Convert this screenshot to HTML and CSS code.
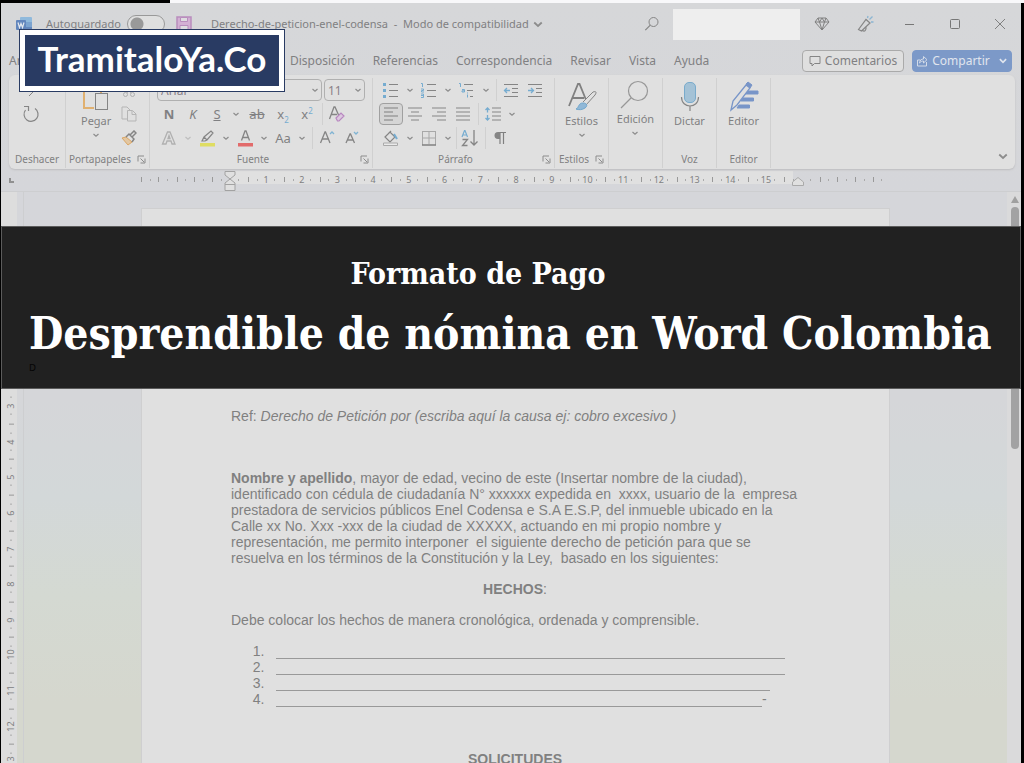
FILE: index.html
```html
<!DOCTYPE html>
<html lang="es">
<head>
<meta charset="utf-8">
<meta name="viewport" content="width=device-width, initial-scale=1">
<title>Desprendible de nómina en Word Colombia</title>
<link rel="stylesheet" href="styles.css">
</head>
<body>
<svg class="defs" aria-hidden="true">
  <symbol id="chev" viewBox="0 0 8 8"><path d="M1.500 3 4 5.300l2.500-2.300" fill="none" stroke="#8c8c8c" stroke-width="1.200"/></symbol>
  <symbol id="launch" viewBox="0 0 9 9"><path d="M1 6.500V1h6M3.500 3.500 7 7M8 3.500V8H3.500" fill="none" stroke="#8c8c8c" stroke-width="1"/></symbol>
</svg>
<div class="strip"></div>
<div class="app">
  <header class="titlebar">
    <svg class="word" width="17" height="17" viewBox="0 0 17 17"><rect x="4" y="1" width="12" height="15" rx="1" fill="#8fb9dc"/><path d="M4 6h12v5H4z" fill="#7ba3d0"/><path d="M4 11h12v5H4z" fill="#6488be"/><rect y="4" width="10" height="10" rx="1" fill="#6286bd"/><path d="m2 6.500 1.500 5L5 7.500l1.500 4 1.500-5" fill="none" stroke="#e4e8ee" stroke-width="1.200"/></svg>
    <label class="auto">Autoguardado <input type="checkbox" role="switch"></label>
    <button class="plain save" aria-label="Guardar"><svg width="16" height="16" viewBox="0 0 16 16"><path d="M1 1h14v14H1z" fill="#d3b0d4" stroke="#b98dbd" stroke-width="1.500"/><path d="M4.500 1.500h7v4h-7zM4 9.500h8V15H4z" fill="#dedde0" stroke="#b98dbd"/></svg></button>
    <span class="filename">Derecho-de-peticion-enel-codensa&nbsp; -&nbsp; Modo de compatibilidad</span>
    <svg class="chev big" width="12" height="12"><use href="#chev"/></svg>
    <div class="right">
      <button class="plain" aria-label="Buscar"><svg width="16" height="16" viewBox="0 0 16 16"><circle cx="9.500" cy="6" r="4.500" fill="none" stroke="#858585"/><path d="m6.300 9.200-5 5" stroke="#858585" stroke-width="1.200"/></svg></button>
      <div class="account"></div>
      <button class="plain gem" aria-label="Premium"><svg width="16" height="16" viewBox="0 0 16 16"><path d="M4 2h8l3 4-7 8-7-8zM1 6h14M5.500 6 8 14l2.500-8L8 2 5.500 6 4 2m6.500 4L12 2" fill="none" stroke="#808080" stroke-width="1"/></svg></button>
      <button class="plain mega" aria-label="Novedades"><svg width="18" height="18" viewBox="0 0 18 18"><path d="M1.500 14.500 9 4.500l4 3.500-8.500 8zM5.500 15.500c2 1.500 4 0 3.500-3.500" fill="none" stroke="#858585" stroke-width="1.200"/><path d="m10.500 3 .500-2M12.500 4.500l3-3M14 7h2.500" stroke="#8bb5d2" stroke-width="1.300"/></svg></button>
      <button class="plain win" aria-label="Minimizar"><svg width="12" height="12" viewBox="0 0 12 12"><path d="M1 6.500h9" stroke="#777"/></svg></button>
      <button class="plain win" aria-label="Maximizar"><svg width="12" height="12" viewBox="0 0 12 12"><rect x="1.500" y="1.500" width="9" height="9" rx="1" fill="none" stroke="#777"/></svg></button>
      <button class="plain win" aria-label="Cerrar"><svg width="12" height="12" viewBox="0 0 12 12"><path d="m1 1 10 10M11 1 1 11" stroke="#808080"/></svg></button>
    </div>
  </header>
  <nav class="tabs">
    <a class="first" href="#archivo">Archivo</a>
    <a href="#disposicion">Disposición</a>
    <a href="#referencias">Referencias</a>
    <a href="#correspondencia">Correspondencia</a>
    <a href="#revisar">Revisar</a>
    <a href="#vista">Vista</a>
    <a href="#ayuda">Ayuda</a>
    <div class="tabactions">
      <button class="comments"><svg width="12" height="12" viewBox="0 0 12 12"><path d="M1 1.500h10v7H5.500L3 11V8.500H1z" fill="none" stroke="#858585"/></svg>Comentarios</button>
      <button class="share"><svg width="12" height="12" viewBox="0 0 12 12"><path d="M4.500 5H1.500v6h9V7M3.500 8c.5-3 2-4 4-4V1.500L11 4.700 7.500 8V6C6 6 5 6.500 3.500 8z" fill="none" stroke="#d3dbe8"/></svg>Compartir<svg width="10" height="10" viewBox="0 0 8 8"><path d="M1.500 2.500 4 5l2.500-2.500" fill="none" stroke="#e0e5ee" stroke-width="1.300"/></svg></button>
    </div>
  </nav>
  <section class="ribbon">
    <div class="group g-undo">
      <div class="tools center">
        <svg width="20" height="12" viewBox="0 0 20 12"><path d="m8 9 6-6" stroke="#858585" fill="none"/></svg>
        <button class="plain" aria-label="Rehacer"><svg width="18" height="18" viewBox="0 0 18 18"><path d="M3.500 5A7 7 0 1 0 13 3.500M2 1.500h4.500V6" fill="none" stroke="#858585" stroke-width="1.200"/></svg></button>
      </div>
      <div class="caption">Deshacer</div>
    </div>
    <div class="group g-clip">
      <div class="tools cliprow">
        <button class="plain tall"><svg width="28" height="34" viewBox="0 0 28 34"><path d="M19 5v10M2 5v24h10M2 5h17" fill="none" stroke="#e0b070" stroke-width="2"/><rect x="13.500" y="14.500" width="12" height="16" fill="#e0e0e0" stroke="#858585"/></svg>Pegar<svg class="chev" width="8" height="8"><use href="#chev"/></svg></button>
        <div class="stack">
          <button class="plain" aria-label="Cortar"><svg width="16" height="16" viewBox="0 0 16 16"><path d="m5 2 5 9M11 2l-5 9" stroke="#b0b0b0"/><circle cx="4.500" cy="12.500" r="2" fill="none" stroke="#b0b0b0"/><circle cx="11.500" cy="12.500" r="2" fill="none" stroke="#b0b0b0"/></svg></button>
          <button class="plain" aria-label="Copiar"><svg width="16" height="16" viewBox="0 0 16 16"><path d="M6 13H1V1h5l3 3M6.500 4.500h5l3.500 3.500v7H6.500zM11 5v3.500h4" fill="none" stroke="#b5b5b5"/></svg></button>
          <button class="plain" aria-label="Copiar formato"><svg width="16" height="16" viewBox="0 0 16 16"><path d="m1 8 4-1 6 5-4 3z" fill="#e2c7a3" stroke="#dba664"/><path d="m5 7 3-3 5 5-2 3M9 5l4-4 2 2-4 4" fill="none" stroke="#858585" stroke-width="1.500"/></svg></button>
        </div>
      </div>
      <div class="caption">Portapapeles<svg width="9" height="9"><use href="#launch"/></svg></div>
    </div>
    <div class="group g-font">
      <div class="tools">
        <div class="row">
          <span class="pick family"><select aria-label="Fuente"><option>Arial</option></select><svg class="chev" width="8" height="8"><use href="#chev"/></svg></span>
          <span class="pick size"><select aria-label="Tamaño"><option>11</option></select><svg class="chev" width="8" height="8"><use href="#chev"/></svg></span>
        </div>
        <div class="row">
          <button class="plain b"><b>N</b></button><button class="plain b"><i>K</i></button><button class="plain b"><u>S</u></button><svg class="chev" width="8" height="8"><use href="#chev"/></svg>
          <button class="plain b wide"><s>ab</s></button><button class="plain b"><span>x<sub>2</sub></span></button><button class="plain b"><span>x<sup>2</sup></span></button><i class="sep"></i>
          <button class="plain b" aria-label="Borrar formato"><svg width="18" height="18" viewBox="0 0 18 18"><path d="M1.500 14 6 2h1l4 9M3 9.500h6" fill="none" stroke="#858585" stroke-width="1.300"/><path d="m8 13 5-5 3 3-5 5H9.500z" fill="#dcc8df" stroke="#b887c0" stroke-width="1.200"/></svg></button>
        </div>
        <div class="row">
          <button class="plain b" aria-label="Efectos de texto"><svg width="16" height="16" viewBox="0 0 16 16"><path d="M1.500 14 6.500 2h2.500l5 12h-3l-1-3H6l-1 3zM7 8.500h2L8 5.500z" fill="none" stroke="#b0b0b0" stroke-width="1.300"/></svg></button><svg class="chev faint" width="8" height="8"><use href="#chev"/></svg>
          <button class="plain b" aria-label="Color de resaltado"><svg width="18" height="18" viewBox="0 0 18 18"><path d="M2 14h15v3.500H2z" fill="#dfdd62"/><path d="m4 12 2-4 7-6 2 2-6 7-2 1zM6 8l3 3" fill="none" stroke="#858585" stroke-width="1.200"/></svg></button><svg class="chev" width="8" height="8"><use href="#chev"/></svg>
          <button class="plain b" aria-label="Color de fuente"><svg width="18" height="18" viewBox="0 0 18 18"><path d="M2 14h15v3.500H2z" fill="#e26b6b"/><path d="M5.500 11.500 9 2h1l3.500 9.500M6.500 8.500h6" fill="none" stroke="#858585" stroke-width="1.300"/></svg></button><svg class="chev" width="8" height="8"><use href="#chev"/></svg>
          <button class="plain b">Aa</button><svg class="chev" width="8" height="8"><use href="#chev"/></svg><i class="sep"></i>
          <button class="plain b" aria-label="Aumentar tamaño"><svg width="18" height="18" viewBox="0 0 18 18"><path d="M2.500 14 7 3h.500L12 14M4 10h7" fill="none" stroke="#858585" stroke-width="1.300"/><path d="m12 5 2-2 2 2" fill="none" stroke="#7fb3d3" stroke-width="1.300"/></svg></button>
          <button class="plain b" aria-label="Reducir tamaño"><svg width="18" height="18" viewBox="0 0 18 18"><path d="m4 14 4-9h.500l4 9M5.500 11h6" fill="none" stroke="#858585" stroke-width="1.300"/><path d="m12 3 2 2 2-2" fill="none" stroke="#7fb3d3" stroke-width="1.300"/></svg></button>
        </div>
      </div>
      <div class="caption wide-cap">Fuente<svg class="end" width="9" height="9"><use href="#launch"/></svg></div>
    </div>
    <div class="group g-par">
      <div class="tools">
        <div class="row">
          <button class="plain b" aria-label="Viñetas"><svg width="16" height="16" viewBox="0 0 16 16"><path d="M6 2.500h9M6 8.500h9M6 14.500h9" stroke="#858585"/><path d="M0 1h3v3H0zM0 7h3v3H0zM0 13h3v3H0z" fill="#76acd0"/></svg></button><svg class="chev" width="8" height="8"><use href="#chev"/></svg>
          <button class="plain b" aria-label="Numeración"><svg width="16" height="16" viewBox="0 0 16 16"><path d="M6 2.500h9M6 8.500h9M6 14.500h9" stroke="#858585"/><path d="M0 1.500h1.500V5M0 7h2.500v1.500H.5V10H3M0 12h2.500v3.500H0m0-2h2.500" fill="none" stroke="#76acd0"/></svg></button><svg class="chev" width="8" height="8"><use href="#chev"/></svg>
          <button class="plain b" aria-label="Lista multinivel"><svg width="16" height="16" viewBox="0 0 16 16"><path d="M5 2.500h9M8 8.500h6M11 14.500h3" stroke="#858585"/><path d="M0 1.500h1.500V5M3 7.500h2.500V10H3V8.800h2.500M8.500 12.500v3M8.500 10.500v1" fill="none" stroke="#76acd0"/></svg></button><svg class="chev" width="8" height="8"><use href="#chev"/></svg><i class="sep"></i>
          <button class="plain b" aria-label="Disminuir sangría"><svg width="16" height="16" viewBox="0 0 16 16"><path d="M1 2.500h14M9 6.500h6M9 10.500h6M1 14.500h14" stroke="#858585"/><path d="M7 8.500H1.500M4 6 1.500 8.500 4 11" fill="none" stroke="#76acd0" stroke-width="1.300"/></svg></button>
          <button class="plain b" aria-label="Aumentar sangría"><svg width="16" height="16" viewBox="0 0 16 16"><path d="M1 2.500h14M9 6.500h6M9 10.500h6M1 14.500h14" stroke="#858585"/><path d="M1 8.500h5.500M4 6l2.500 2.500L4 11" fill="none" stroke="#76acd0" stroke-width="1.300"/></svg></button>
        </div>
        <div class="row">
          <button class="plain b on" aria-label="Alinear a la izquierda"><svg width="16" height="16" viewBox="0 0 16 16"><path d="M1 2h14M1 6h9M1 10h14M1 14h9" stroke="#808080" stroke-width="1.200"/></svg></button>
          <button class="plain b" aria-label="Centrar"><svg width="16" height="16" viewBox="0 0 16 16"><path d="M1 2h14M4 6h8M1 10h14M4 14h8" stroke="#858585" stroke-width="1.200"/></svg></button>
          <button class="plain b" aria-label="Alinear a la derecha"><svg width="16" height="16" viewBox="0 0 16 16"><path d="M1 2h14M6 6h9M1 10h14M6 14h9" stroke="#858585" stroke-width="1.200"/></svg></button>
          <button class="plain b" aria-label="Justificar"><svg width="16" height="16" viewBox="0 0 16 16"><path d="M1 2h14M1 6h14M1 10h14M1 14h14" stroke="#858585" stroke-width="1.200"/></svg></button><i class="sep"></i>
          <button class="plain b" aria-label="Espaciado"><svg width="16" height="16" viewBox="0 0 16 16"><path d="M7 2h9M7 6h9M7 10h9M7 14h9" stroke="#858585" stroke-width="1.200"/><path d="M2.500 1.500V6.500M.5 4l2-2 2 2M2.500 9v5.500M.5 12l2 2 2-2" fill="none" stroke="#76acd0" stroke-width="1.300"/></svg></button><svg class="chev" width="8" height="8"><use href="#chev"/></svg>
        </div>
        <div class="row">
          <button class="plain b" aria-label="Sombreado"><svg width="16" height="16" viewBox="0 0 16 16"><path d="m2 7 5-5 5 5-5 5zM5 4 8 1" fill="none" stroke="#858585" stroke-width="1.200"/><path d="m11 4 3 5" stroke="#76acd0" stroke-width="2"/><path d="M.5 13h14v2.500H.5z" fill="#eaeaea" stroke="#aaa"/></svg></button><svg class="chev" width="8" height="8"><use href="#chev"/></svg>
          <button class="plain b" aria-label="Bordes"><svg width="16" height="16" viewBox="0 0 16 16"><path d="M1.500 1v14M14.500 1v14M1 1.500h14M8 2v12M2 8h12" stroke="#a8a8a8"/><path d="M1 15h14" stroke="#808080" stroke-width="1.500"/></svg></button><svg class="chev" width="8" height="8"><use href="#chev"/></svg><i class="sep tight"></i>
          <button class="plain b" aria-label="Ordenar"><svg width="18" height="18" viewBox="0 0 18 18"><path d="m1 8 2.500-6.500h.500L6.500 8M2 6h4" fill="none" stroke="#76acd0" stroke-width="1.200"/><path d="M1.500 10.500h5L1.500 16.500h5M13 1v15M9.500 12.500 13 16l3.500-3.500" fill="none" stroke="#858585" stroke-width="1.300"/></svg></button><i class="sep"></i>
          <button class="plain b" aria-label="Mostrar todo"><svg width="14" height="14" viewBox="0 0 14 14"><path d="M7 2v11M10.500 2v11M6 1.500h7" fill="none" stroke="#808080" stroke-width="1.200"/><path d="M7 1H5a3 3 0 0 0 0 7h2z" fill="#858585"/></svg></button>
        </div>
      </div>
      <div class="caption wide-cap">Párrafo<svg class="end" width="9" height="9"><use href="#launch"/></svg></div>
    </div>
    <div class="group g-one">
      <div class="tools"><button class="plain tall"><svg width="32" height="34" viewBox="0 0 32 34"><path d="M3 27 12 5h1.500l7 17M6 19h12" fill="none" stroke="#808080" stroke-width="1.800"/><path d="m17 23 10-10c3-1 4 0 2 3l-9 10" fill="#e0e0e0" stroke="#858585"/><path d="M10 30c3-1 2-6 7-6 4 0 5 3 2 5-3 2-6 2-9 1z" fill="#91b8d7" stroke="#6fa6cc"/></svg>Estilos<svg class="chev" width="8" height="8"><use href="#chev"/></svg></button></div>
      <div class="caption">Estilos<svg width="9" height="9"><use href="#launch"/></svg></div>
    </div>
    <div class="group g-one">
      <div class="tools"><button class="plain tall"><svg width="32" height="32" viewBox="0 0 32 32"><circle cx="19" cy="12" r="9.500" fill="none" stroke="#979797" stroke-width="1.200"/><path d="M12 19 2 29" stroke="#979797" stroke-width="1.300"/></svg>Edición<svg class="chev" width="8" height="8"><use href="#chev"/></svg></button></div>
      <div class="caption"></div>
    </div>
    <div class="group g-one">
      <div class="tools"><button class="plain tall"><svg width="32" height="34" viewBox="0 0 32 34"><rect x="10.500" y="3.500" width="11" height="20" rx="4.500" fill="#a4c2d6" stroke="#79abcc"/><path d="M7.500 18c0 12 17 12 17 0M16 27v5" fill="none" stroke="#858585" stroke-width="1.200"/></svg>Dictar</button></div>
      <div class="caption">Voz</div>
    </div>
    <div class="group g-one">
      <div class="tools"><button class="plain tall"><svg width="34" height="34" viewBox="0 0 34 34"><path d="M20 12h11v3H18zM16 19h10.500v3H14zM12 26h10.500v3H10z" fill="#7895c8" stroke="#7895c8"/><path d="m4 31 2-9L19 6l4 3L10 26z" fill="#e0e0e0" stroke="#7895c8" stroke-width="1.300"/><path d="m19 5 2-2 4 3-2 3z" fill="#7895c8" stroke="#7895c8"/></svg>Editor</button></div>
      <div class="caption">Editor</div>
    </div>
    <button class="plain collapse" aria-label="Contraer cinta"><svg class="chev" width="12" height="12"><use href="#chev"/></svg></button>
  </section>
  <div class="rulerbar">
    <span class="tabstop"></span>
    <div class="hruler">
      <span class="blank"></span><span class="blank"></span><span class="zero"><svg width="12" height="22" viewBox="0 0 12 22"><path d="M1 1.500h10V5L6 9l5 4v7.500H1V13l5-4-5-4zM1 14.500h10" fill="#e0e0e0" stroke="#a2a2a2"/></svg></span><span>1</span><span>2</span><span>3</span><span>4</span><span>5</span><span>6</span><span>7</span><span>8</span><span>9</span><span>10</span><span>11</span><span>12</span><span>13</span><span>14</span><span>15</span><span class="limit"><svg width="12" height="9" viewBox="0 0 12 9"><path d="M.5 8.500V5L6 .500 11.500 5v3.500z" fill="#e0e0e0" stroke="#aaa"/></svg></span><span class="blank"></span><span class="blank"></span>
    </div>
  </div>
  <main class="workspace">
    <div class="vruler"><div class="vcells"><span>3</span><span>4</span><span>5</span><span>6</span><span>7</span><span>8</span><span>9</span><span>10</span><span>11</span><span>12</span><span>13</span></div></div>
    <div class="canvas">
      <article class="paper">
        <p class="ref">Ref: <em>Derecho de Petición por (escriba aquí la causa ej: cobro excesivo )</em></p>
        <p class="body"><strong>Nombre y apellido</strong>, mayor de edad, vecino de este (Insertar nombre de la ciudad),<br>identificado con cédula de ciudadanía N° xxxxxx expedida en&nbsp; xxxx, usuario de la&nbsp; empresa<br>prestadora de servicios públicos Enel Codensa e S.A E.S.P, del inmueble ubicado en la<br>Calle xx No. Xxx -xxx de la ciudad de XXXXX, actuando en mi propio nombre y<br>representación, me permito interponer&nbsp; el siguiente derecho de petición para que se<br>resuelva en los términos de la Constitución y la Ley,&nbsp; basado en los siguientes:</p>
        <p class="mid"><strong>HECHOS</strong>:</p>
        <p>Debe colocar los hechos de manera cronológica, ordenada y comprensible.</p>
        <ol>
          <li><span class="rule"></span></li>
          <li><span class="rule"></span></li>
          <li><span class="rule short"></span></li>
          <li><span class="rule shorter"></span>-</li>
        </ol>
        <p class="mid"><strong>SOLICITUDES</strong></p>
      </article>
    </div>
    <div class="scroll"><span class="arrow"></span><span class="thumb"></span></div>
  </main>
</div>
<div class="logo">TramitaloYa.Co</div>
<section class="banner">
  <h2>Formato de Pago</h2>
  <h1>Desprendible de nómina en Word Colombia</h1>
  <small>D</small>
</section>
</body>
</html>
```
FILE: styles.css
```css
* { box-sizing: border-box; }
body {
  margin: 0;
  background: #000;
  color: #808082;
  font: 12px/16px "Noto Sans", "Open Sans", sans-serif;
  height: 100vh;
  overflow: hidden;
  position: relative;
  display: flex;
  flex-direction: column;
}
p, h1, h2, ol { margin: 0; padding: 0; }
svg { display: block; flex: none; }
.defs { position: absolute; width: 0; height: 0; }
.strip { height: 3px; margin-left: 170px; background: #f8f8fa; flex: none; }
.app {
  flex: 1;
  min-height: 0;
  margin: 0 3px 0 1px;
  display: flex;
  flex-direction: column;
  background: linear-gradient(#d6d7d9, #d5d6da 25%, #d5d6d9 52%, #d3d8d9 65%, #d4d9d2 78%, #d5d7ce 92%);
}
.plain {
  border: 0;
  padding: 0;
  background: none;
  color: inherit;
  font: inherit;
  display: flex;
  align-items: center;
  justify-content: center;
}

/* Title bar */
.titlebar { height: 42px; display: flex; align-items: center; padding: 0 13px 0 15px; flex: none; font-size: 11px; }
.auto { display: flex; align-items: center; gap: 6px; margin-left: 13px; white-space: nowrap; }
.auto input {
  appearance: none;
  width: 38px;
  height: 18px;
  margin: 0;
  border: 1px solid #999;
  border-radius: 9px;
  background: radial-gradient(circle at 9px 8px, #999 6px, transparent 7px) #dfdfdf;
}
.save { margin: 0 19px 0 11px; }
.filename { white-space: nowrap; }
.big { margin-left: 3px; }
.right { margin-left: auto; display: flex; align-items: center; }
.account { width: 127px; height: 31px; background: #eee; margin: 0 14px 0 13px; }
.gem { margin-right: 27px; }
.mega { margin-right: 12px; }
.win { width: 45px; }
.win:last-child { width: 46px; margin-right: -15px; }

/* Tabs */
.tabs { height: 30px; display: flex; align-items: center; gap: 18px; padding: 2px 9px 0 8px; flex: none; }
.tabs a { color: inherit; text-decoration: none; }
.tabs .first { width: 263px; }
.tabactions { display: flex; gap: 8px; margin-left: auto; }
.comments, .share {
  display: flex;
  align-items: center;
  justify-content: center;
  gap: 4px;
  height: 22px;
  padding: 0;
  border: 1px solid #aaa;
  border-radius: 4px;
  background: #dfdfdf;
  color: inherit;
  font: inherit;
}
.comments { width: 102px; }
.share { width: 100px; background: #7c99c8; border-color: #7c99c8; color: #e0e5ee; }
.share svg:last-child { margin-left: 4px; }

/* Ribbon */
.ribbon {
  height: 94px;
  margin: 0 6px 0 8px;
  display: flex;
  flex: none;
  position: relative;
  padding: 3px 0 1px;
  background: #e0e0e0;
  border-radius: 6px;
  box-shadow: 0 1px 2px #bdbdbf;
  font-size: 11px;
}
.group { border-right: 1px solid #d0d0d0; display: flex; flex-direction: column; }
.tools { flex: 1; }
.caption {
  height: 15px;
  font-size: 10px;
  line-height: 15px;
  display: flex;
  justify-content: center;
  align-items: center;
  gap: 6px;
  position: relative;
  margin-bottom: 1px;
}
.wide-cap { padding-right: 16px; }
.caption .end { position: absolute; right: 3px; }
.g-undo { width: 57px; }
.g-clip { width: 84px; }
.g-font { width: 223px; }
.g-par { width: 182px; }
.g-one { width: 54px; }
.g-par .tools { padding-left: 6px; }
.g-font .tools { padding-left: 7px; }
.center { display: flex; flex-direction: column; align-items: center; padding: 9px 12px 0 0; gap: 6px; }
.cliprow { display: flex; padding-left: 15px; }
.stack { margin-left: 10px; padding-top: 4px; display: flex; flex-direction: column; gap: 8px; }
.tall { flex-direction: column; margin: 0 auto; padding-top: 1px; font-size: 11px; }
.tall > .chev { margin-top: 2px; }
.cliprow .tall { margin: 0; height: 64px; justify-content: flex-start; }
.row { display: flex; align-items: center; height: 24px; }
.chev { margin: 0 3px; }
.faint { opacity: .4; }
.b { width: 24px; height: 22px; font-size: 13px; }
.wide { width: 28px; }
.on { background: #d5d5d5; border: 1px solid #a0a0a0; border-radius: 4px; }
.sep { width: 1px; height: 22px; background: #d0d0d0; margin: 0 2px 0 3px; }
.tight { margin: 0 1px; }
sub, sup { font-size: 8px; line-height: 0; color: #76acd0; }
.pick { position: relative; height: 22px; margin-right: 2px; }
.pick select {
  appearance: none;
  width: 100%;
  height: 22px;
  border: 1px solid #b0b0b0;
  border-radius: 4px;
  background: #e0e0e0;
  color: #8a8088;
  font: 12px "Noto Sans", sans-serif;
  padding: 0 3px;
}
.pick .chev { position: absolute; right: 0; top: 7px; }
.family { width: 165px; }
.size { width: 41px; }
.collapse { position: absolute; right: 3px; bottom: 7px; }

/* Horizontal ruler */
.rulerbar { display: flex; height: 23px; flex: none; border-bottom: 1px solid #cdced0; padding-top: 2px; }
.tabstop { width: 5px; height: 5px; margin: 7px 127px 0 8px; border: solid #909090; border-width: 0 0 2px 2px; }
.hruler {
  display: grid;
  grid-template-columns: repeat(21, 1fr);
  width: 750px;
  height: 13px;
  font-size: 9px;
  line-height: 17px;
  text-align: center;
  background: linear-gradient(90deg, transparent 12%, #e0e0e0 12%, #e0e0e0 87%, transparent 87%);
}
.hruler span {
  height: 17px;
  background:
    linear-gradient(#999, #999) 0 6px / 1px 5px no-repeat,
    linear-gradient(#aaa, #aaa) 25% 8px / 1px 2px no-repeat,
    linear-gradient(#aaa, #aaa) 75% 8px / 1px 2px no-repeat;
}
.hruler .blank {
  background:
    linear-gradient(#999, #999) 0 6px / 1px 5px no-repeat,
    linear-gradient(#999, #999) 50% 6px / 1px 5px no-repeat,
    linear-gradient(#aaa, #aaa) 25% 8px / 1px 2px no-repeat,
    linear-gradient(#aaa, #aaa) 75% 8px / 1px 2px no-repeat;
}
.zero svg { margin: -1px auto 0; }
.limit svg { margin: 6px 0 0 8px; }

/* Workspace */
.workspace { display: flex; flex: 1; min-height: 0; overflow: hidden; }
.vruler {
  width: 23px;
  padding: 196px 6px 0 4px;
  border-right: 1px solid #cdced0;
  background: linear-gradient(90deg, #dddddd 16px, transparent 16px);
  flex: none;
}
.vcells { display: grid; grid-template-rows: repeat(11, 1fr); height: 392px; font-size: 9px; }
.vcells span {
  writing-mode: vertical-rl;
  transform: rotate(180deg);
  text-align: center;
  line-height: 12px;
  background:
    linear-gradient(#999, #999) 3px 100% / 5px 1px no-repeat,
    linear-gradient(#aaa, #aaa) 5px 25% / 2px 1px no-repeat,
    linear-gradient(#aaa, #aaa) 5px 75% / 2px 1px no-repeat;
}
.canvas { flex: 1; padding: 16px 117px 0; }
.paper {
  min-height: 100%;
  padding: 199px 90px 0 89px;
  background: #e0e0e0;
  border: 1px solid #cfcfd0;
  border-bottom: 0;
  color: #808080;
  font: 14px/16px "Liberation Sans", Arial, sans-serif;
  white-space: nowrap;
}
.ref { margin-bottom: 46px; }
.mid { text-align: center; margin: 15px 0; }
ol { margin-top: 15px; padding-left: 45px; margin-bottom: 44px; }
li { height: 16px; }
li::marker { content: counter(list-item) ".\00a0\00a0\00a0"; }
.rule { display: inline-block; width: 509px; height: 1px; background: #999; vertical-align: -3px; }
.short { width: 494px; }
.shorter { width: 486px; }
.scroll { width: 14px; padding: 4px 2px 0 4px; flex: none; background: #dadadb; }
.arrow { display: block; width: 0; height: 0; border: solid transparent; border-width: 0 4px 7px; border-bottom-color: #a0a0a0; }
.thumb { display: block; width: 8px; height: 242px; margin-top: 4px; border-radius: 4px; background: #a2a2a3; }

/* Overlays */
.logo {
  position: absolute;
  left: 19px;
  top: 29px;
  width: 266px;
  height: 63px;
  border: 1px solid #293b63;
  background: #293b63;
  box-shadow: inset 0 0 0 5px #fff;
  color: #fff;
  font: bold 35px/56px Lato, sans-serif;
  text-align: center;
}
.banner {
  position: absolute;
  left: 1px;
  right: 3px;
  top: 226px;
  height: 163px;
  padding: 27px 0 0 27px;
  border: 1px solid #5c5c5c;
  background: #212121;
  color: #fff;
  white-space: nowrap;
}
.banner h2 { width: 898px; font: bold 30px/40px "DejaVu Serif Condensed", "DejaVu Serif", serif; text-align: center; }
.banner h1 { margin-top: 12px; font: bold 44px/56px "DejaVu Serif Condensed", "DejaVu Serif", serif; }
.banner small { display: block; margin-top: 1px; font: 9px/10px "DejaVu Sans", sans-serif; color: #050505; }
```
